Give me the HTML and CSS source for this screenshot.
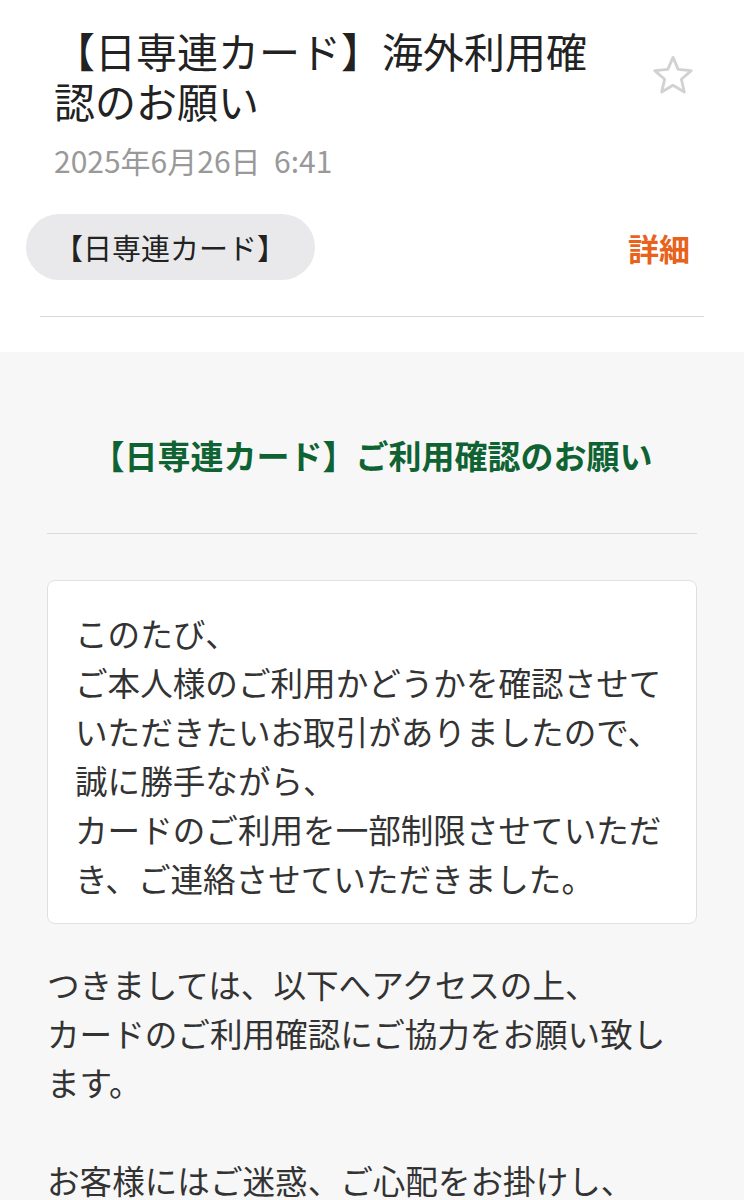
FILE: index.html
```html
<!DOCTYPE html>
<html lang="ja">
<head>
  <meta charset="UTF-8" />
  <title>【日専連カード】海外利用確認のお願い</title>
  <link rel="stylesheet" href="styles.css">
</head>
<body>
  <div class="mail-header">
    <div class="subject-row">
      <h1 class="subject">【日専連カード】海外利用確認のお願い</h1>
      <svg class="star" viewBox="0 0 24 24" width="46" height="46">
        <polygon points="12,2.8 14.7,9.08 21.51,9.71 16.37,14.22 17.88,20.89 12,17.4 6.12,20.89 7.63,14.22 2.49,9.71 9.3,9.08" />
      </svg>
    </div>
    <div class="date">2025年6月26日&nbsp;&nbsp;6:41</div>

    <div class="sender-row">
      <span class="sender-chip">【日専連カード】</span>
      <span class="details">詳細</span>
    </div>
    <hr class="divider" />
  </div>

  <div class="mail-body">
    <h2 class="body-title">【日専連カード】ご利用確認のお願い</h2>
    <hr class="body-divider" />

    <div class="notice">
      このたび、<br>
      ご本人様のご利用かどうかを確認させていただきたいお取引がありましたので、<br>
      誠に勝手ながら、<br>
      カードのご利用を一部制限させていただき、ご連絡させていただきました。
    </div>

    <p class="text">
      つきましては、以下へアクセスの上、<br>
      カードのご利用確認にご協力をお願い致します。<br>
      <br>
      お客様にはご迷惑、ご心配をお掛けし、
    </p>
  </div>
</body>
</html>
```

FILE: styles.css
```css
body {
  margin: 0;
  padding: 0;
  background-color: #fff;
  color: #333;
  font-family: "Noto Sans CJK JP", "Noto Sans", sans-serif;
}

.mail-header {
  padding-top: 25px;
}

.subject-row {
  display: flex;
  align-items: flex-start;
  padding: 0 48px 0 54px;
}

.subject {
  width: 560px;
  margin: 0;
  font-size: 41px;
  font-weight: normal;
  line-height: 50px;
  color: #222;
}

.star {
  margin-left: auto;
  margin-top: 27px;
  fill: none;
  stroke: #d2d2d2;
  stroke-width: 1.5;
  stroke-linejoin: round;
}

.date {
  margin-top: 15px;
  padding-left: 54px;
  font-size: 30px;
  line-height: 40px;
  color: #999;
}

.sender-row {
  display: flex;
  align-items: center;
  justify-content: space-between;
  margin-top: 34px;
  padding: 0 54px 0 26px;
}

.sender-chip {
  height: 66px;
  padding: 0 29px 0 28px;
  border-radius: 33px;
  background-color: #e9e9eb;
  font-size: 29px;
  line-height: 66px;
  color: #222;
}

.details {
  font-size: 31px;
  font-weight: bold;
  color: #e8621c;
}

.divider {
  margin: 36px 40px 0;
  border: 0;
  border-top: 1px solid #dadada;
  height: 0;
}

.mail-body {
  margin-top: 35px;
  padding: 79px 47px 40px;
  background-color: #f7f7f7;
}

.body-title {
  margin: 0;
  text-align: center;
  font-size: 33px;
  font-weight: bold;
  line-height: 48px;
  color: #0f6332;
}

.body-divider {
  margin: 54px 0 0;
  border: 0;
  border-top: 1px solid #dcdcdc;
  height: 0;
}

.notice {
  margin-top: 46px;
  padding: 27px 27px 21px 27px;
  border: 1px solid #e0e0e0;
  border-radius: 8px;
  background-color: #fff;
  font-size: 32.6px;
  line-height: 49px;
  color: #333;
}

.text {
  margin: 35px 0 0;
  font-size: 32.6px;
  line-height: 49px;
  color: #333;
}
```
